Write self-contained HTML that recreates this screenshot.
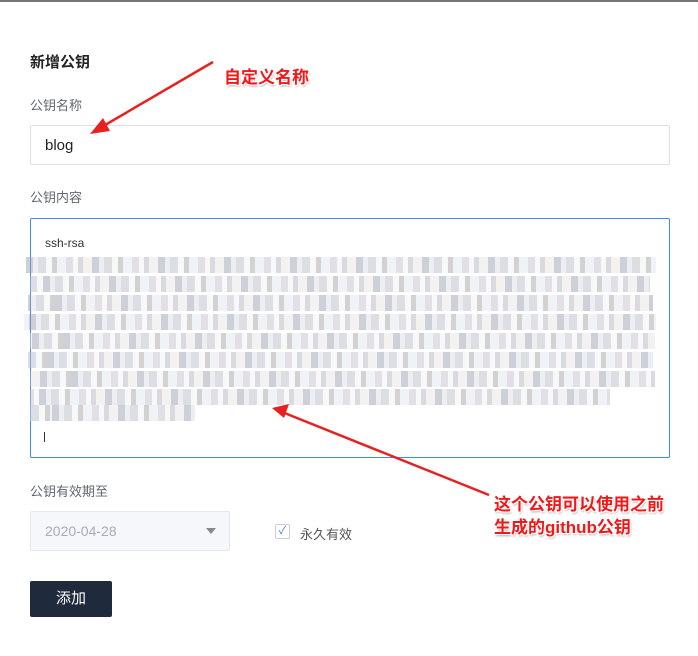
<!DOCTYPE html>
<html><head><meta charset="utf-8"><style>
body{margin:0;width:698px;height:656px;background:#fff;position:relative;overflow:hidden;font-family:"Liberation Sans","Noto Sans CJK SC",sans-serif;}
.a{position:absolute}
.lbl{font-size:13px;color:#606770}
.blur{position:absolute;height:16px;opacity:.5;
background:repeating-linear-gradient(90deg,#9aa0b0 0 7px,#d8dce4 7px 12px,#b8bcc8 12px 20px,#eef0f4 20px 26px,#a8a4a0 26px 31px,#dfe6ee 31px 40px,#c4c0cc 40px 47px,#f0f0f2 47px 52px,#b0b4c0 52px 57px,#e8e4e0 57px 66px);}
.red{color:#f01818;font-weight:bold;font-size:17px;text-shadow:1px 1px 0 #fff,-1px -1px 0 #fff,1px -1px 0 #fff,-1px 1px 0 #fff,1px 2px 2px #aaa}
</style></head><body>
<div class="a" style="left:0;top:0;width:698px;height:2px;background:#777"></div>
<div class="a" style="left:30px;top:51px;font-size:15px;font-weight:bold;color:#222">新增公钥</div>
<div class="a lbl" style="left:30px;top:95px">公钥名称</div>
<div class="a" style="left:30px;top:125px;width:638px;height:38px;border:1px solid #dcdfe6;border-radius:2px"></div>
<div class="a" style="left:45px;top:137px;font-size:15px;color:#222">blog</div>
<div class="a lbl" style="left:30px;top:187px">公钥内容</div>
<div class="a" style="left:30px;top:218px;width:638px;height:238px;border:1px solid #3c8cf0;border-radius:2px"></div>
<div class="a" style="left:45px;top:236px;font-size:12px;color:#333">ssh-rsa</div>
<div class="blur" style="left:26px;top:257px;width:630px"></div>
<div class="blur" style="left:30px;top:276px;width:620px;background-position:13px 0"></div>
<div class="blur" style="left:28px;top:295px;width:625px;background-position:27px 0"></div>
<div class="blur" style="left:24px;top:314px;width:632px;background-position:5px 0"></div>
<div class="blur" style="left:30px;top:333px;width:625px;background-position:33px 0"></div>
<div class="blur" style="left:28px;top:352px;width:625px;background-position:19px 0"></div>
<div class="blur" style="left:30px;top:371px;width:625px;background-position:41px 0"></div>
<div class="blur" style="left:30px;top:389px;width:580px;background-position:9px 0"></div>
<div class="blur" style="left:30px;top:405px;width:165px;background-position:22px 0"></div>
<div class="a" style="left:44px;top:432px;width:1px;height:10px;background:#333"></div>
<div class="a lbl" style="left:30px;top:481px">公钥有效期至</div>
<div class="a" style="left:30px;top:511px;width:198px;height:38px;border:1px solid #e4e7ed;background:#f5f7fa;border-radius:2px"></div>
<div class="a" style="left:45px;top:523px;font-size:14px;color:#aab">2020-04-28</div>
<div class="a" style="left:206px;top:528px;width:0;height:0;border-left:5px solid transparent;border-right:5px solid transparent;border-top:6px solid #888"></div>
<div class="a" style="left:275px;top:524px;width:13px;height:13px;border:1px solid #ccd;border-radius:2px;color:#3c8cf0;font-size:11px;line-height:13px;text-align:center">✓</div>
<div class="a lbl" style="left:300px;top:524px;color:#555">永久有效</div>
<div class="a" style="left:30px;top:581px;width:82px;height:36px;background:#1f2a3d;border-radius:2px;color:#fff;font-size:15px;line-height:36px;text-align:center">添加</div>
<div class="a red" style="left:224px;top:63px">自定义名称</div>
<div class="a red" style="left:494px;top:493px;line-height:23px">这个公钥可以使用之前<br>生成的github公钥</div>
<svg class="a" style="left:0;top:0" width="698" height="656">
<line x1="213" y1="62" x2="100" y2="128" stroke="#e82020" stroke-width="2.5"/>
<polygon points="90,134 103,118 110,131" fill="#e82020"/>
<line x1="489" y1="495" x2="282" y2="412" stroke="#e82020" stroke-width="2.5"/>
<polygon points="272,408 289,404 284,418" fill="#e82020"/>
</svg>
</body></html>
